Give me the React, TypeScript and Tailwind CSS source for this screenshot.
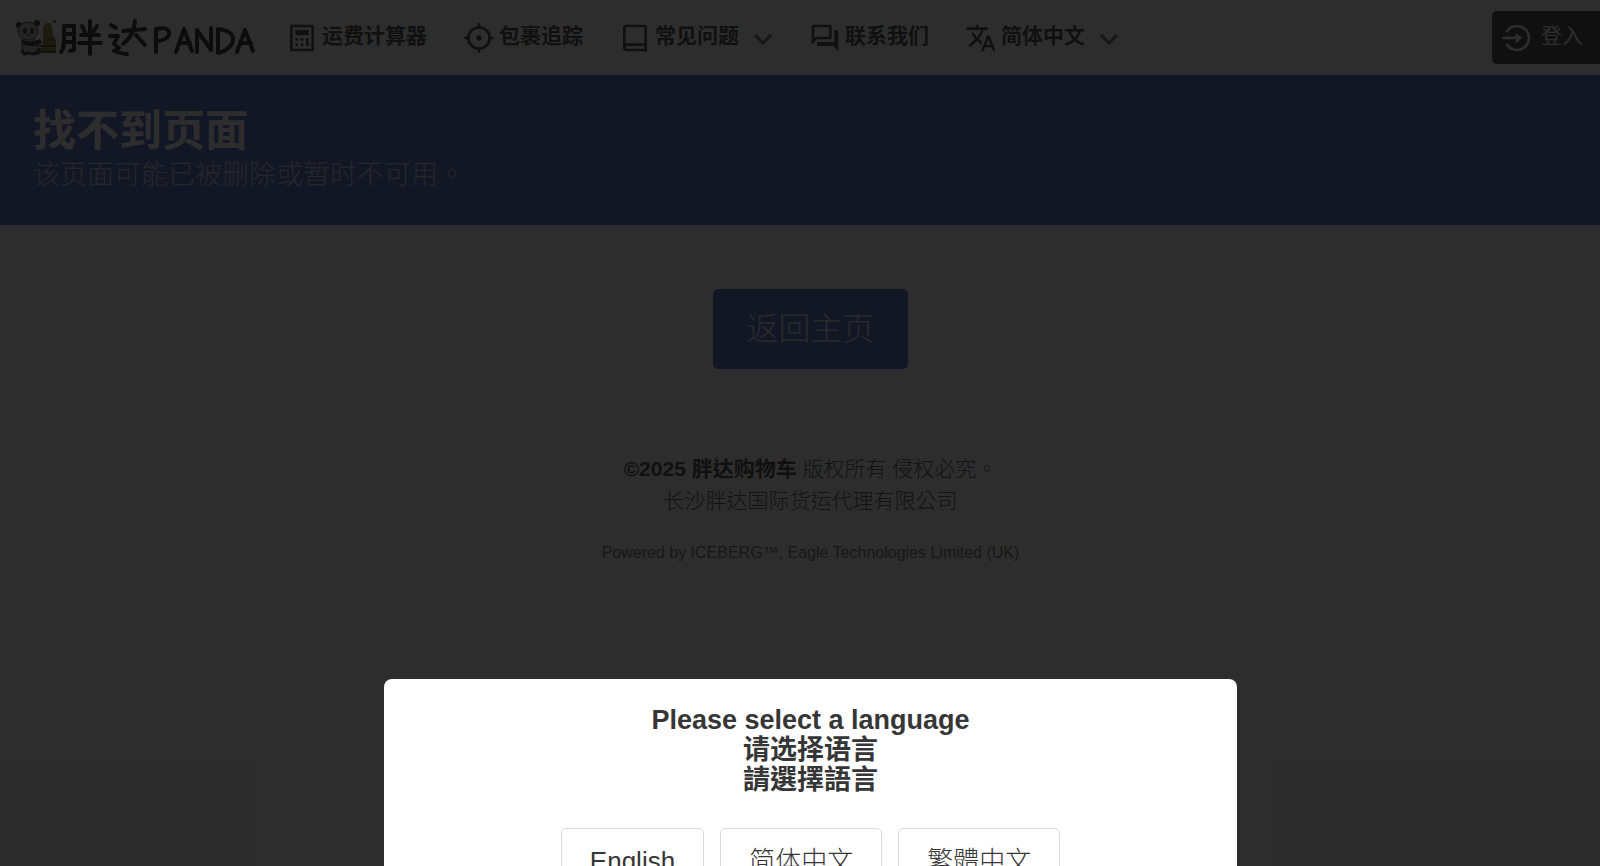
import { useState } from "react";
import type { ReactNode } from "react";

const SANS = "font-['Liberation_Sans','Noto_Sans_CJK_SC',sans-serif]";
const SANS_TC = "font-['Liberation_Sans','Noto_Sans_CJK_TC',sans-serif]";

const LANGUAGES = [
  { code: "en", label: "English" },
  { code: "zh-CN", label: "简体中文" },
  { code: "zh-TW", label: "繁體中文" },
];

function Icon({ children }: { children: ReactNode }) {
  return (
    <svg viewBox="0 0 24 24" fill="currentColor" className="size-8 shrink-0" aria-hidden="true">
      {children}
    </svg>
  );
}

function CalculatorIcon() {
  return (
    <Icon>
      <path
        fillRule="evenodd"
        d="M4 2h16a1 1 0 0 1 1 1v18a1 1 0 0 1-1 1H4a1 1 0 0 1-1-1V3a1 1 0 0 1 1-1zm1 2v16h14V4H5zm2 2h10v4H7V6zm0 6h2v2H7v-2zm0 4h2v2H7v-2zm4-4h2v2h-2v-2zm0 4h2v2h-2v-2zm4-4h2v6h-2v-6z"
      />
    </Icon>
  );
}

function CrosshairIcon() {
  return (
    <Icon>
      <circle cx="12" cy="12" r="8" fill="none" stroke="currentColor" strokeWidth="2" />
      <circle cx="12" cy="12" r="2" />
      <path d="M11 1h2v4h-2zM11 19h2v4h-2zM1 11h4v2H1zM19 11h4v2h-4z" />
    </Icon>
  );
}

function BookIcon() {
  return (
    <Icon>
      <path
        fillRule="evenodd"
        d="M21 18H6a1 1 0 0 0 0 2h15v2H6a3 3 0 0 1-3-3V4a2 2 0 0 1 2-2h14a2 2 0 0 1 2 2v14zM5 16.050c.16-.03.33-.05.5-.05H19V4H5v12.050z"
      />
      <path d="M19 17h2v5h-2z" />
    </Icon>
  );
}

function ChatIcon() {
  return (
    <Icon>
      <path d="M15 4v7H5.17L4 12.17V4h11m1-2H3c-.55 0-1 .45-1 1v14l4-4h10c.55 0 1-.45 1-1V3c0-.55-.45-1-1-1zm5 4h-2v9H6v2c0 .55.45 1 1 1h11l4 4V7c0-.55-.45-1-1-1z" />
    </Icon>
  );
}

function TranslateIcon() {
  return (
    <Icon>
      <path d="M12.87 15.07l-2.54-2.51.03-.03A17.52 17.52 0 0 0 14.07 6H17V4h-7V2H8v2H1v1.99h11.17C11.5 7.92 10.44 9.75 9 11.35 8.07 10.32 7.3 9.19 6.69 8h-2c.73 1.63 1.73 3.17 2.98 4.56l-5.09 5.02L4 19l5-5 3.11 3.11.76-2.04zM18.5 10h-2L12 22h2l1.12-3h4.75L21 22h2l-4.5-12zm-2.62 7l1.62-4.33L19.12 17h-3.24z" />
    </Icon>
  );
}

function LoginIcon() {
  return (
    <Icon>
      <path d="M4 7.8A9 9 0 1 1 4 16.2" fill="none" stroke="currentColor" strokeWidth="2" />
      <path d="M1 11h10V8l5 4-5 4v-3H1z" />
    </Icon>
  );
}

function Chevron() {
  return (
    <svg viewBox="0 0 20 20" className="ml-[14px] size-5 shrink-0 text-[#5a5a5a]" fill="none" stroke="currentColor" strokeWidth="3" aria-hidden="true">
      <path d="M2 7l8 8 8-8" />
    </svg>
  );
}

// Hand-lettered wordmark with the panda mascot
function Logo() {
  return (
    <svg viewBox="0 0 240 40" className="h-10 w-60" role="img" aria-label="胖达 PANDA" fill="none" strokeLinecap="round" strokeLinejoin="round">
      <g fill="#8f7d1c">
        <path d="M27 9l3-4h4l2 4 1 8 3 5v13H25l2-14z" />
        <path d="M36 4l5-3-2 4z" fill="#444" />
      </g>
      <path d="M24 28h15M25 34h14M31 22h5" stroke="#3f3820" strokeWidth="2" />
      <ellipse cx="14" cy="28" rx="8" ry="8" fill="#bdbdbd" stroke="#333" strokeWidth="1" />
      <path d="M5 21q8 5 19 0l2 4q-6 4-11 3-6 0-9-3z" fill="#222" />
      <path d="M6 33l2 3 5-1M16 36l6-1 2-4" stroke="#222" strokeWidth="3" />
      <circle cx="3" cy="7" r="3" fill="#222" />
      <circle cx="21" cy="5" r="3" fill="#222" />
      <ellipse cx="12" cy="13" rx="10" ry="9" fill="#bdbdbd" stroke="#333" strokeWidth="1" />
      <ellipse cx="9" cy="13" rx="2" ry="3" fill="#222" />
      <ellipse cx="16" cy="13" rx="2" ry="3" fill="#222" />
      <path d="M11 17q2 2 4 0" stroke="#222" />
      <g stroke="#1a1a1a" strokeWidth="4">
        <path d="M48 8v14q0 8-3 12M48 8h10v24l-4 1M48 16h9M48 24h9" />
        <path d="M66 8l3 6M81 8l-4 6M65 17h18M63 25h22M74 3v33" />
        <path d="M95 7l5 3M94 18h8l-4 8 5 4-5 3q8 3 13 3" />
        <path d="M107 13l22-2M119 3q-1 15-12 23M120 17l9 10" />
      </g>
      <g stroke="#1a1a1a" strokeWidth="4">
        <path d="M140 34V11q14-3 13 5-1 6-12 7" />
        <path d="M160 34l8-23 8 22M163 25h11" />
        <path d="M181 34V12l14 20V10" />
        <path d="M202 35V11q16 2 15 11-1 9-15 13" />
        <path d="M221 34l8-22 8 21M224 25h11" />
      </g>
    </svg>
  );
}

function NavItem({ icon, label, className = "" }: { icon: ReactNode; label: string; className?: string }) {
  return (
    <a href="#" className={`flex items-center text-[21px] font-bold text-[#363636] ${className}`}>
      {icon}
      <span className="ml-1 pb-1">{label}</span>
    </a>
  );
}

function NavMenu({ icon, label, className = "" }: { icon: ReactNode; label: string; className?: string }) {
  return (
    <button type="button" className={`flex items-center text-[21px] font-bold text-[#363636] ${className}`}>
      {icon}
      <span className="ml-1 pb-1">{label}</span>
      <Chevron />
    </button>
  );
}

function Header() {
  return (
    <header className="flex h-[75px] items-center bg-white px-4">
      <a href="#" className="mr-[30px]">
        <Logo />
      </a>
      <nav className="flex items-center">
        <NavItem icon={<CalculatorIcon />} label="运费计算器" className="mr-9" />
        <NavItem icon={<CrosshairIcon />} label="包裹追踪" className="mr-9" />
        <NavMenu icon={<BookIcon />} label="常见问题" className="mr-9" />
        <NavItem icon={<ChatIcon />} label="联系我们" className="mr-9" />
        <NavMenu icon={<TranslateIcon />} label="简体中文" />
      </nav>
      <a href="#" className="ml-auto flex h-[53px] items-center gap-2 rounded-[5px] bg-[#363636] pr-[22px] pl-[9px] text-[21px] text-white">
        <LoginIcon />
        <span className="pb-1">登入</span>
      </a>
    </header>
  );
}

function Hero() {
  return (
    <section className="bg-[#485fc7] px-[33px] pt-8 pb-[29px] text-white">
      <h1 className="text-[43px] leading-[48px] font-semibold">找不到页面</h1>
      <p className={`text-[27px] leading-[41px] font-light text-white/70 ${SANS_TC}`}>该页面可能已被删除或暂时不可用。</p>
    </section>
  );
}

function Footer() {
  return (
    <footer className={`bg-[#fafafa] py-5 text-center text-[21px] leading-8 text-[#4a4a4a] ${SANS_TC}`}>
      <p className="font-light">
        <strong className="font-bold text-[#363636]">©2025 胖达购物车</strong> 版权所有 侵权必究。
      </p>
      <p className="font-light">长沙胖达国际货运代理有限公司</p>
      <p className="mt-5 text-[16px] text-[#6a6a6a]">Powered by ICEBERG™, Eagle Technologies Limited (UK)</p>
    </footer>
  );
}

function LanguageModal({ onSelect }: { onSelect: (code: string) => void }) {
  return (
    <div className="absolute inset-0 flex items-start justify-center bg-[#0a0a0a]/86 pt-[679px]">
      <div role="dialog" aria-modal="true" aria-labelledby="lang-title" className="w-[853px] rounded-lg bg-white px-8 pt-[26px] pb-8">
        <h2 id="lang-title" className="text-center text-[27px] leading-[30px] font-bold text-[#363636]">
          Please select a language
          <br />
          请选择语言
          <br />
          <span lang="zh-TW" className={SANS_TC}>請選擇語言</span>
        </h2>
        <div className="mt-[33px] flex justify-center gap-4">
          {LANGUAGES.map((l) => (
            <button
              key={l.code}
              type="button"
              lang={l.code}
              onClick={() => onSelect(l.code)}
              className={`h-[66px] rounded-[5px] border border-[#dbdbdb] bg-white px-7 text-[26px] font-light text-[#363636] ${SANS_TC}`}
            >
              {l.label}
            </button>
          ))}
        </div>
      </div>
    </div>
  );
}

export default function App() {
  const [language, setLanguage] = useState("");

  return (
    <div className={`h-screen overflow-hidden bg-white ${SANS}`}>
      {/* the header bleeds slightly past the right edge of the window */}
      <div className="relative h-full w-[calc(100%+21px)] overflow-hidden">
        <Header />
        <Hero />
        <main className="flex justify-center py-16">
          <a href="#" className="flex h-20 items-center rounded-[5px] bg-[#485fc7] px-[33px] text-[32px] font-light text-white/80">
            返回主页
          </a>
        </main>
        <Footer />
        {!language && <LanguageModal onSelect={setLanguage} />}
      </div>
    </div>
  );
}
